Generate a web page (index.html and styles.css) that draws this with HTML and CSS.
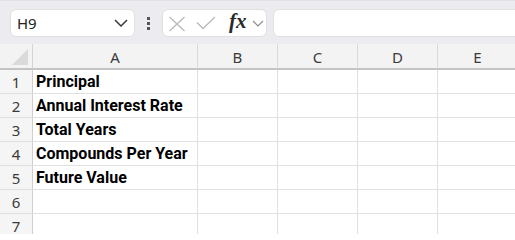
FILE: index.html
```html
<!DOCTYPE html>
<html>
<head>
<meta charset="utf-8">
<link rel="stylesheet" href="styles.css">
</head>
<body>
<div class="app">
  <div class="toolbar">
    <div class="namebox">
      <span class="ref">H9</span>
      <svg class="chev" width="14" height="8" viewBox="0 0 14 8"><polyline points="1,1 7,7 13,1" fill="none" stroke="#3a3a3a" stroke-width="1.5"/></svg>
    </div>
    <div class="dots"><i></i><i></i><i></i></div>
    <div class="fxbox">
      <svg class="ico-x" width="18" height="16" viewBox="0 0 18 16"><path d="M1.5 1 L16.5 15 M16.5 1 L1.5 15" stroke="#b9b9b9" stroke-width="1.3" fill="none"/></svg>
      <svg class="ico-ok" width="20" height="14" viewBox="0 0 20 14"><polyline points="1,6.5 7,12.5 19,1" fill="none" stroke="#b9b9b9" stroke-width="1.3"/></svg>
      <span class="fx">fx</span>
      <svg class="chev-s" width="12" height="7" viewBox="0 0 12 7"><polyline points="1,1 6,6 11,1" fill="none" stroke="#8a8a8a" stroke-width="1.1"/></svg>
    </div>
    <div class="formula"></div>
  </div>
  <div class="sheet">
    <div class="corner"><svg width="18" height="18" viewBox="0 0 18 18"><polygon points="17,1 17,17 1,17" fill="#dadada"/></svg></div>
    <div class="ch">A</div><div class="ch">B</div><div class="ch">C</div><div class="ch">D</div><div class="ch">E</div>

    <div class="rh">1</div><div class="c b">Principal</div><div class="c"></div><div class="c"></div><div class="c"></div><div class="c"></div>
    <div class="rh">2</div><div class="c b">Annual Interest Rate</div><div class="c"></div><div class="c"></div><div class="c"></div><div class="c"></div>
    <div class="rh">3</div><div class="c b">Total Years</div><div class="c"></div><div class="c"></div><div class="c"></div><div class="c"></div>
    <div class="rh">4</div><div class="c b">Compounds Per Year</div><div class="c"></div><div class="c"></div><div class="c"></div><div class="c"></div>
    <div class="rh">5</div><div class="c b">Future Value</div><div class="c"></div><div class="c"></div><div class="c"></div><div class="c"></div>
    <div class="rh">6</div><div class="c"></div><div class="c"></div><div class="c"></div><div class="c"></div><div class="c"></div>
    <div class="rh">7</div><div class="c"></div><div class="c"></div><div class="c"></div><div class="c"></div><div class="c"></div>
  </div>
</div>
</body>
</html>
```
FILE: styles.css
```css
html, body {
  margin: 0;
  padding: 0;
  background: #ffffff;
  overflow: hidden;
}
.app {
  width: 515px;
  height: 234px;
  overflow: hidden;
  font-family: "Noto Sans", "Open Sans", sans-serif;
}
.toolbar {
  height: 44px;
  box-sizing: border-box;
  background: #ececf0;
  border-top: 1px solid #e2e2e6;
  padding: 8px 0 0 10px;
  display: flex;
  align-items: flex-start;
}
.toolbar > * { flex-shrink: 0; }
.namebox {
  width: 125px;
  height: 28px;
  box-sizing: border-box;
  background: #fff;
  border: 1px solid #e0e0e0;
  border-radius: 6px;
  display: flex;
  align-items: center;
  padding: 0 6px 0 6px;
}
.ref {
  font-size: 15px;
  color: #222;
  flex: 1;
  line-height: 1;
}
.chev { display: block; }
.dots {
  width: 27px;
  height: 28px;
  display: flex;
  flex-direction: column;
  align-items: center;
  justify-content: center;
  gap: 2px;
}
.dots i {
  display: block;
  width: 3px;
  height: 3px;
  background: #555;
}
.fxbox {
  width: 105px;
  height: 28px;
  box-sizing: border-box;
  background: #fff;
  border: 1px solid #e0e0e0;
  border-radius: 6px;
  display: flex;
  align-items: center;
  padding-left: 5px;
}
.ico-x { display: block; margin-top: 1px; }
.ico-ok { display: block; margin-left: 10px; margin-top: -1px; }
.fx {
  font-family: "Liberation Serif", serif;
  font-style: italic;
  font-weight: 700;
  font-size: 21px;
  color: #2a2a2a;
  margin-left: 13px;
  line-height: 1;
  margin-top: -3px;
}
.chev-s { display: block; margin-left: 5px; }
.formula {
  width: 260px;
  height: 28px;
  box-sizing: border-box;
  background: #fff;
  border: 1px solid #e0e0e0;
  border-radius: 6px;
  margin-left: 6px;
}
.sheet {
  display: grid;
  grid-template-columns: 33px 165px 80px 80px 80px 80px;
  grid-template-rows: 26px repeat(7, 24px);
  width: 518px;
}
.corner {
  background: #f3f3f3;
  border-right: 1px solid #d4d4d4;
  border-bottom: 2px solid #c4c4c4;
  box-sizing: border-box;
  display: flex;
  align-items: flex-end;
  justify-content: flex-end;
  padding: 0 3px 2px 0;
}
.corner svg { display: block; }
.ch {
  background: #f3f3f3;
  border-right: 1px solid #d9d9d9;
  border-bottom: 2px solid #c4c4c4;
  box-sizing: border-box;
  display: flex;
  align-items: center;
  justify-content: center;
  font-size: 15px;
  color: #3a3a3a;
  padding-top: 1px;
}
.rh {
  background: #f5f5f5;
  border-right: 1px solid #cfcfcf;
  border-bottom: 1px solid #e0e0e0;
  box-sizing: border-box;
  display: flex;
  align-items: center;
  justify-content: center;
  font-size: 15px;
  color: #3a3a3a;
}
.c {
  border-right: 1px solid #e0e0e0;
  border-bottom: 1px solid #e0e0e0;
  box-sizing: border-box;
  font-family: "Roboto", "Liberation Sans", sans-serif;
  font-size: 16px;
  color: #000;
  padding: 2px 0 0 3px;
  line-height: 20px;
  white-space: nowrap;
}
.b { font-weight: 700; }
```
